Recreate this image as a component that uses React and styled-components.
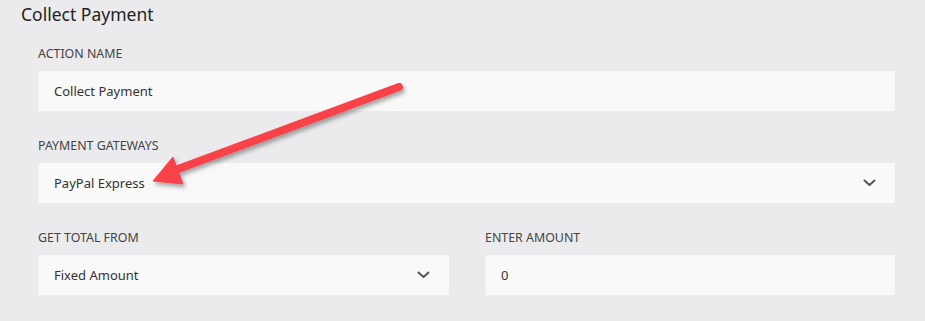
import React from "react";
import styled, { createGlobalStyle } from "styled-components";

const Global = createGlobalStyle`
  html, body { margin: 0; padding: 0; background: #ebebed; }
  body { font-family: "Segoe UI", "Noto Sans", "Open Sans", sans-serif; }
`;

const Page = styled.div`
  position: relative;
  width: 925px;
  height: 321px;
  background: #ebebed;
  box-sizing: border-box;
  padding: 2px 30px 0 21px;
  overflow: hidden;
`;

const Title = styled.h2`
  margin: 0;
  font-size: 17.5px;
  font-weight: 400;
  color: #222;
  line-height: 24px;
`;

const Body = styled.div`
  padding: 21px 0 0 17px;
  display: flex;
  flex-direction: column;
  gap: 28px;
`;

const Row = styled.div`
  display: grid;
  grid-template-columns: ${(p) => p.$cols || "1fr"};
  column-gap: 36px;
`;

const Field = styled.div`
  display: flex;
  flex-direction: column;
`;

const Label = styled.label`
  font-size: 12.4px;
  color: #444;
  line-height: 14px;
  margin-bottom: 10px;
  text-transform: uppercase;
`;

const Box = styled.div`
  height: 40px;
  background: #f9f9f9;
  border-left: 1px solid #f2f2f2;
  box-sizing: border-box;
  display: flex;
  align-items: center;
  justify-content: space-between;
  padding: 0 19px 0 15px;
  font-size: 13px;
  color: #333;
`;

const Chevron = () => (
  <svg width="13" height="8" viewBox="0 0 13 8">
    <path d="M1.5 1.5 L6.5 6 L11.5 1.5" fill="none" stroke="#555" strokeWidth="2" strokeLinecap="round" strokeLinejoin="round" />
  </svg>
);

const ArrowOverlay = styled.svg`
  position: absolute;
  left: 0;
  top: 0;
  pointer-events: none;
`;

export default function App() {
  return (
    <Page>
      <Global />
      <Title>Collect Payment</Title>
      <Body>
        <Row>
          <Field>
            <Label>Action Name</Label>
            <Box>Collect Payment</Box>
          </Field>
        </Row>
        <Row>
          <Field>
            <Label>Payment Gateways</Label>
            <Box>
              PayPal Express
              <Chevron />
            </Box>
          </Field>
        </Row>
        <Row $cols="411px 410px">
          <Field>
            <Label>Get Total From</Label>
            <Box>
              Fixed Amount
              <Chevron />
            </Box>
          </Field>
          <Field>
            <Label>Enter Amount</Label>
            <Box>0</Box>
          </Field>
        </Row>
      </Body>
      <ArrowOverlay width="925" height="321" viewBox="0 0 925 321">
        <defs>
          <filter id="sh" x="-20%" y="-20%" width="140%" height="140%">
            <feDropShadow dx="2" dy="3" stdDeviation="2" floodColor="#000" floodOpacity="0.35" />
          </filter>
        </defs>
        <g filter="url(#sh)" fill="#f8434a" stroke="#f8434a">
          <line x1="399" y1="87" x2="170" y2="172" strokeWidth="8" strokeLinecap="round" />
          <polygon points="153,181 173,157 183,184" strokeWidth="1" strokeLinejoin="round" />
        </g>
      </ArrowOverlay>
    </Page>
  );
}
